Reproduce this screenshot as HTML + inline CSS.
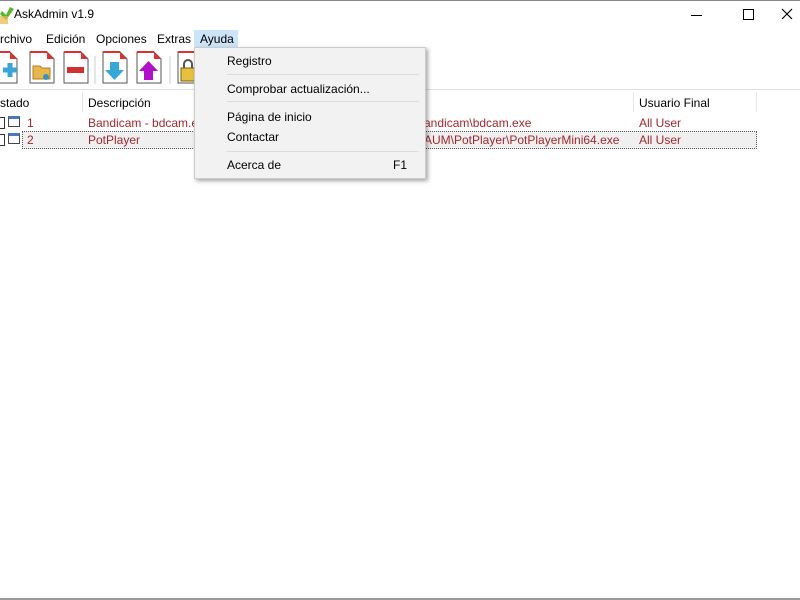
<!DOCTYPE html>
<html><head><meta charset="utf-8"><style>
body{margin:0;width:800px;height:600px;background:#fff;font-family:"Liberation Sans",sans-serif;font-size:12px;color:#000;position:relative;overflow:hidden}
.a{position:absolute;white-space:nowrap}
.red{color:#a0282d}
.menu{background:#f2f2f2;border:1px solid #ccc;box-shadow:2px 2px 4px rgba(0,0,0,.35)}
.sep{position:absolute;height:1px;background:#ddd;left:32px;right:6px}
</style></head><body>
<div class="a" style="left:0;top:0;width:800px;height:1px;background:#888"></div>
<svg class="a" style="left:0;top:6px" width="14" height="18"><path d="M0 8 L6 14 L14 3 L10 1 L6 9 L2 5Z" fill="#5ab52a"/><path d="M0 10 L8 10 L8 18 L0 18Z" fill="#e8b84a" opacity=".7"/></svg>
<div class="a" style="left:14px;top:7px;font-size:12px">AskAdmin v1.9</div>
<div class="a" style="left:691px;top:15px;width:11px;height:1px;background:#000"></div>
<div class="a" style="left:743px;top:9px;width:9px;height:9px;border:1px solid #000"></div>
<svg class="a" style="left:781px;top:8px" width="12" height="12"><path d="M1 1 L11 11 M11 1 L1 11" stroke="#000" stroke-width="1.2"/></svg>
<div class="a" style="left:0;top:32px">rchivo</div>
<div class="a" style="left:46px;top:32px">Edición</div>
<div class="a" style="left:96px;top:32px">Opciones</div>
<div class="a" style="left:157px;top:32px">Extras</div>
<div class="a" style="left:194px;top:30px;width:44px;height:18px;background:#cce4f7"></div>
<div class="a" style="left:200px;top:32px">Ayuda</div>
<svg class="a" style="left:0;top:50px" width="200" height="38">
<defs><g id="d"><path d="M1 2 H18 L25 9 V33 H1Z" fill="#fff" stroke="#555"/><path d="M18 2 L25 9 H18Z" fill="#e03030"/><path d="M1 2 H18" stroke="#e03030" stroke-width="2"/></g></defs>
<use href="#d" x="-8"/><path d="M3 20 H17 M10 13 V27" stroke="#3aa6d8" stroke-width="5"/>
<use href="#d" x="29"/><path d="M33 16 H40 L42 18 H50 V29 H33Z" fill="#e6b84c" stroke="#b08020"/><circle cx="46" cy="27" r="3" fill="#3a8fc0"/>
<use href="#d" x="63"/><path d="M67 20 H84" stroke="#d03030" stroke-width="6"/>
<line x1="95" y1="6" x2="95" y2="34" stroke="#ccc"/>
<use href="#d" x="102"/><path d="M110 12 H119 V20 H124 L114.5 30 L105 20 H110Z" fill="#35a8d8"/>
<use href="#d" x="136"/><path d="M144 30 H153 V21 H158 L148.5 11 L139 21 H144Z" fill="#b010c8"/>
<line x1="170" y1="6" x2="170" y2="34" stroke="#ccc"/>
<use href="#d" x="177"/><path d="M181 18 H195 V31 H181Z" fill="#e8c040" stroke="#806010"/><path d="M184 18 V14 A4 4 0 0 1 192 14 V18" fill="none" stroke="#555" stroke-width="2"/>
</svg>
<div class="a" style="left:0;top:89px;width:800px;height:1px;background:#e0e0e0"></div>
<div class="a" style="left:0;top:96px">stado</div>
<div class="a" style="left:82px;top:92px;width:1px;height:20px;background:#e5e5e5"></div>
<div class="a" style="left:88px;top:96px">Descripción</div>
<div class="a" style="left:633px;top:92px;width:1px;height:20px;background:#e5e5e5"></div>
<div class="a" style="left:639px;top:96px">Usuario Final</div>
<div class="a" style="left:756px;top:92px;width:1px;height:20px;background:#e5e5e5"></div>
<div class="a" style="left:22px;top:131px;width:733px;height:16px;background:#f0f0f0;border:1px dotted #555"></div>
<div class="a" style="left:0;top:117px;width:4px;height:10px;border:1px solid #333;border-left:0"></div>
<div class="a" style="left:8px;top:116px;width:12px;height:11px;border:1px solid #446;border-top:3px solid #4a78c0;box-sizing:border-box"></div>
<div class="a" style="left:0;top:134px;width:4px;height:10px;border:1px solid #333;border-left:0"></div>
<div class="a" style="left:8px;top:133px;width:12px;height:11px;border:1px solid #446;border-top:3px solid #4a78c0;box-sizing:border-box"></div>
<div class="a red" style="left:27px;top:116px">1</div>
<div class="a red" style="left:27px;top:133px">2</div>
<div class="a red" style="left:88px;top:116px">Bandicam - bdcam.exe</div>
<div class="a red" style="left:88px;top:133px">PotPlayer</div>
<div class="a red" style="left:424px;top:116px">andicam\bdcam.exe</div>
<div class="a red" style="left:424px;top:133px">AUM\PotPlayer\PotPlayerMini64.exe</div>
<div class="a red" style="left:639px;top:116px">All User</div>
<div class="a red" style="left:639px;top:133px">All User</div>
<div class="a menu" style="left:194px;top:47px;width:230px;height:130px">
<div class="a" style="left:32px;top:6px">Registro</div>
<div class="sep" style="top:26px"></div>
<div class="a" style="left:32px;top:34px">Comprobar actualización...</div>
<div class="sep" style="top:53px"></div>
<div class="a" style="left:32px;top:62px">Página de inicio</div>
<div class="a" style="left:32px;top:82px">Contactar</div>
<div class="sep" style="top:103px"></div>
<div class="a" style="left:32px;top:110px">Acerca de</div>
<div class="a" style="left:198px;top:110px">F1</div>
</div>
<div class="a" style="left:0;top:598px;width:800px;height:2px;background:#999"></div>
</body></html>
